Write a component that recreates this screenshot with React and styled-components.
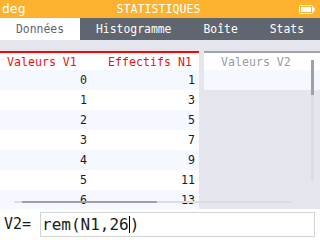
import React from "react";
import styled, { createGlobalStyle } from "styled-components";

const Global = createGlobalStyle`
  html, body { margin: 0; padding: 0; background: #ffffff; }
  * { box-sizing: border-box; }
`;

const MONO = `"DejaVu Sans Mono", "Liberation Mono", monospace`;

const Screen = styled.div`
  width: 320px;
  height: 240px;
  display: flex;
  flex-direction: column;
  overflow: hidden;
  font-family: ${MONO};
  background: #ffffff;
`;

const TopBar = styled.div`
  height: 18px;
  flex: none;
  background: #fdb22f;
  color: #ffffff;
  display: grid;
  grid-template-columns: 1fr auto 1fr;
  align-items: center;
  padding: 0 5px 0 2px;
`;

const Mode = styled.span`
  font-size: 13px;
  line-height: 18px;
`;

const Title = styled.span`
  font-size: 11.6px;
  line-height: 18px;
`;

const Battery = styled.svg`
  justify-self: end;
  display: block;
`;

const TabBar = styled.div`
  height: 22px;
  flex: none;
  display: flex;
  background: #5f6670;
`;

const Tab = styled.div`
  flex: ${(p) => (p.$grow ? "1 1 auto" : "none")};
  padding: 0 16px;
  display: flex;
  align-items: center;
  justify-content: center;
  font-size: 11.4px;
  background: ${(p) => (p.$active ? "#ffffff" : "transparent")};
  color: ${(p) => (p.$active ? "#5f6670" : "#ffffff")};
`;

const TableArea = styled.div`
  flex: 1;
  position: relative;
  overflow: hidden;
  background: #e5e5ee;
  padding-top: 11px;
  display: flex;
  align-items: flex-start;
  gap: 5px;
`;

const Block = styled.div`
  flex: ${(p) => (p.$grow ? "1" : "none")};
  border-top: 2px solid ${(p) => (p.$active ? "#ff0000" : "#a4a4a8")};
`;

const Row = styled.div`
  display: flex;
  height: ${(p) => (p.$head ? "17px" : "20px")};
  background: ${(p) => (p.$alt ? "#f5f8fe" : "#ffffff")};
`;

const Cell = styled.div`
  width: ${(p) => p.$w || "auto"};
  flex: ${(p) => (p.$w ? "none" : "1")};
  display: flex;
  align-items: center;
  justify-content: ${(p) => p.$justify || "flex-end"};
  padding: 0 ${(p) => p.$pr || 0}px 0 ${(p) => p.$pl || 0}px;
  font-size: 11.6px;
  color: ${(p) => p.$color || "#1a1a1a"};
  white-space: nowrap;
`;

const HScroll = styled.div`
  position: absolute;
  left: 14px;
  width: 278px;
  top: 161px;
  height: 2px;
  background: #dddde0;
`;

const HThumb = styled.div`
  margin-left: 8px;
  width: 135px;
  height: 100%;
  background: #a0a0a4;
`;

const VScroll = styled.div`
  position: absolute;
  left: 311px;
  top: 20px;
  width: 3px;
  height: 121px;
  background: #dddde0;
`;

const VThumb = styled.div`
  width: 100%;
  height: 35px;
  background: #a0a0a4;
`;

const Bottom = styled.div`
  height: 31px;
  flex: none;
  background: #ffffff;
  display: flex;
  align-items: flex-start;
  padding: 3px 5px 0 4px;
  gap: 0;
`;

const Label = styled.span`
  width: 36px;
  font-size: 15px;
  line-height: 24px;
  color: #1a1a1a;
`;

const Input = styled.div`
  flex: 1;
  height: 25px;
  border: 1.5px solid #d4d4d4;
  display: flex;
  align-items: center;
  padding-left: 1px;
  font-size: 16px;
  color: #1a1a1a;
  white-space: pre;
`;

const Caret = styled.span`
  display: inline-block;
  width: 1px;
  height: 17px;
  background: #000000;
  margin: 0 0 0 0;
`;

const values = [
  [0, 1],
  [1, 3],
  [2, 5],
  [3, 7],
  [4, 9],
  [5, 11],
  [6, 13],
];

export default function App() {
  return (
    <Screen>
      <Global />
      <TopBar>
        <Mode>deg</Mode>
        <Title>STATISTIQUES</Title>
        <Battery width="16" height="9" viewBox="0 0 16 9">
          <rect x="0.5" y="0.5" width="13" height="8" rx="1" fill="none" stroke="#ffffff" strokeWidth="1" />
          <rect x="2" y="2" width="10" height="5" fill="#ffffff" />
          <rect x="14" y="2.5" width="1.5" height="4" fill="#ffffff" />
        </Battery>
      </TopBar>
      <TabBar>
        <Tab $active>Données</Tab>
        <Tab>Histogramme</Tab>
        <Tab>Boîte</Tab>
        <Tab $grow>Stats</Tab>
      </TabBar>
      <TableArea>
        <Block $active>
          <Row $head>
            <Cell $w="99px" $justify="flex-start" $pl={7} $color="#f01010">Valeurs V1</Cell>
            <Cell $w="100px" $justify="center" $pl={2} $color="#f01010">Effectifs N1</Cell>
          </Row>
          {values.map(([v, n], i) => (
            <Row key={v} $alt={i % 2 === 0}>
              <Cell $w="99px" $pr={12}>{v}</Cell>
              <Cell $w="100px" $pr={4}>{n}</Cell>
            </Row>
          ))}
        </Block>
        <Block $grow>
          <Row $head>
            <Cell $justify="flex-start" $pl={17} $color="#9a9a9a">Valeurs V2</Cell>
          </Row>
          <Row $alt>
            <Cell />
          </Row>
        </Block>
        <HScroll>
          <HThumb />
        </HScroll>
        <VScroll>
          <VThumb />
        </VScroll>
      </TableArea>
      <Bottom>
        <Label>V2=</Label>
        <Input>
          rem(N1,26<Caret />)
        </Input>
      </Bottom>
    </Screen>
  );
}
